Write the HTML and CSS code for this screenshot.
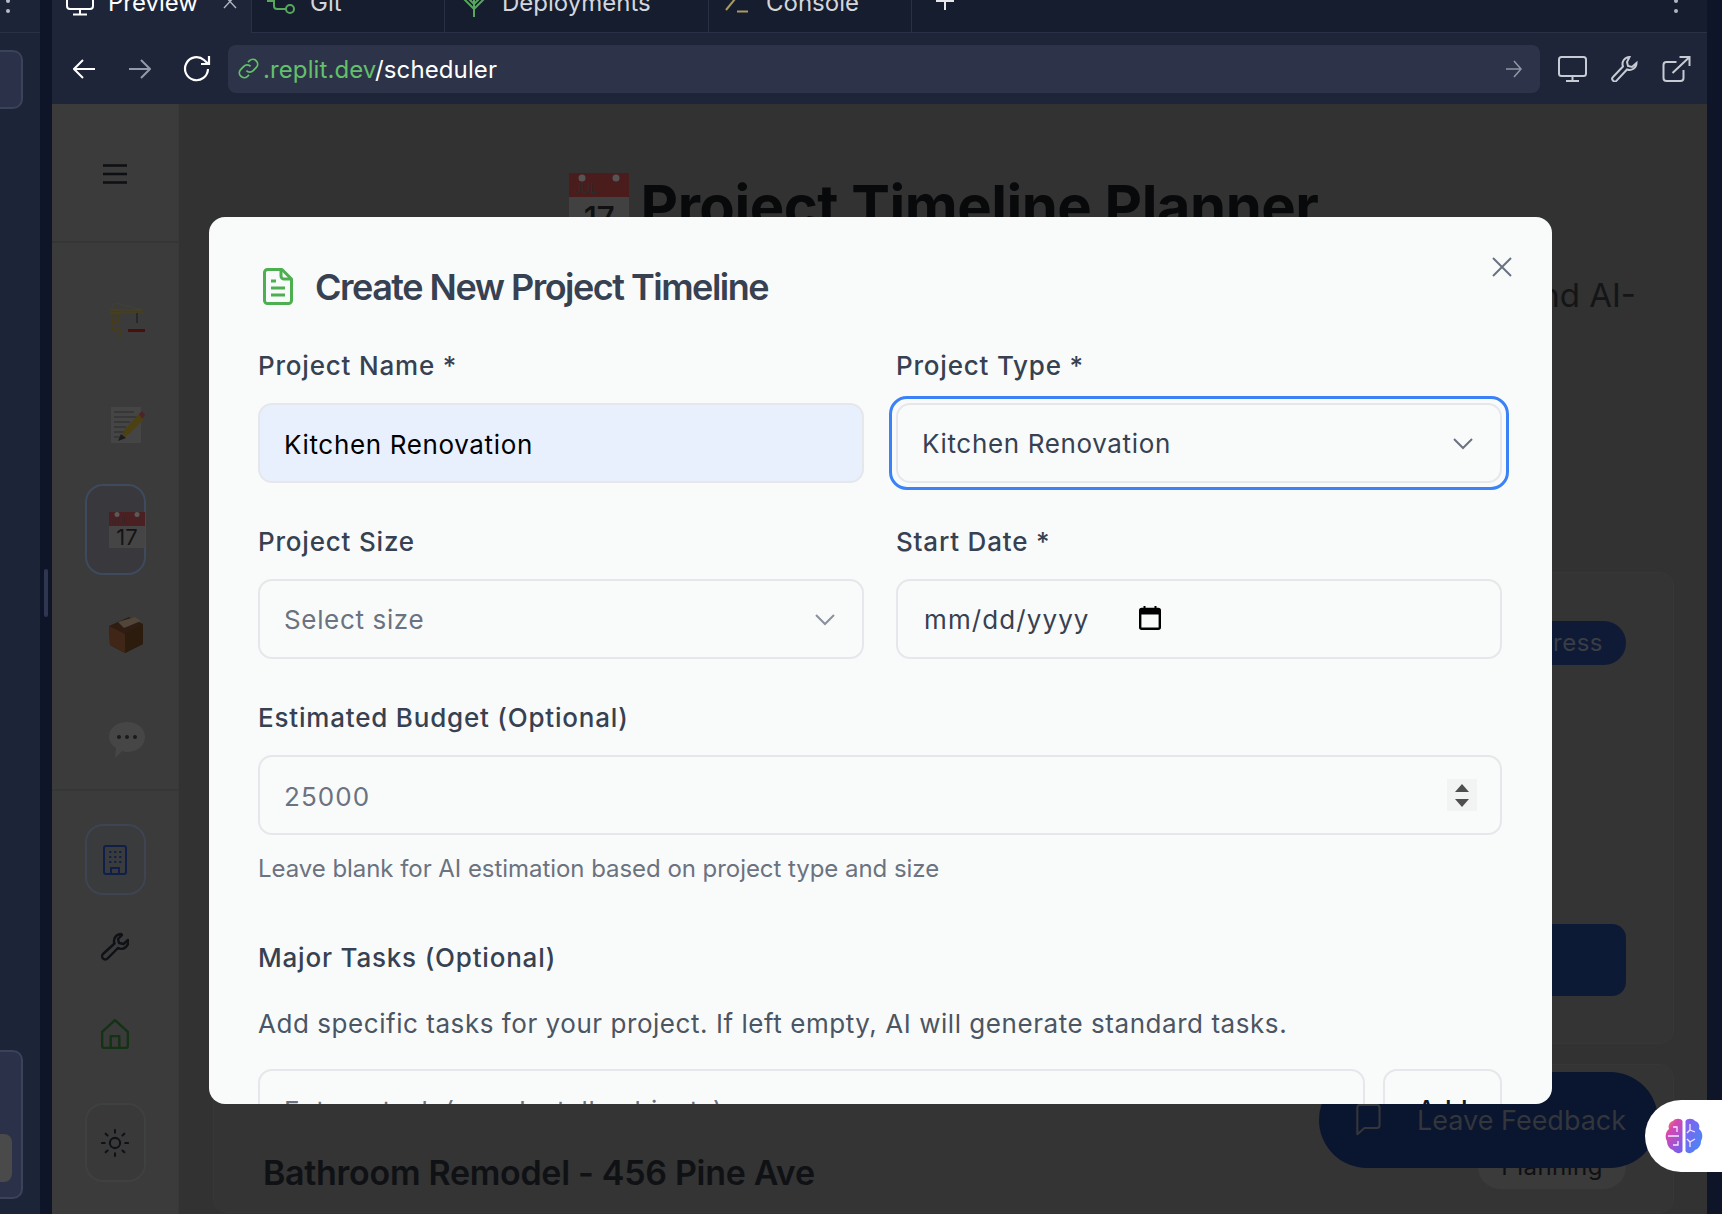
FILE: index.html
```html
<!DOCTYPE html>
<html lang="en">
<head>
<meta charset="utf-8">
<title>Project Timeline Planner</title>
<link rel="stylesheet" href="styles.css">
</head>
<body>
<div class="ide">
  <aside class="rail">
    <div class="rail-top">
      <svg class="rail-dots" viewBox="0 0 6 16" fill="#b7bcc7"><circle cx="3" cy="1" r="2"/><circle cx="3" cy="11" r="2"/></svg>
    </div>
    <div class="rail-card rail-card-a"></div>
    <div class="rail-card rail-card-b"><div class="rail-thumb"></div></div>
  </aside>
  <div class="gutter"><div class="gutter-handle"></div></div>
  <section class="pane">
    <div class="tabs">
      <div class="tab tab-active tab-preview">
        <svg class="tab-icon" viewBox="0 -11 28 28" fill="none" stroke="#fff" stroke-width="2"><rect x="1" y="-12" width="26" height="21" rx="3"/><path d="M14 9v5M7 14.500h14"/></svg>
        <span>Preview</span>
        <svg class="tab-x" viewBox="0 -4 14 14" stroke="#aeb4c0" stroke-width="1.400"><path d="M1-5l12 13M13-5L1 8"/></svg>
      </div>
      <div class="tab tab-git">
        <svg class="tab-icon" viewBox="0 -11 28 28" fill="none" stroke="#57a85c" stroke-width="2"><path d="M0 1h7M7-11v17q0 3 3 3h9"/><circle cx="23" cy="9" r="4"/></svg>
        <span>Git</span>
      </div>
      <div class="tab tab-deploy">
        <svg class="tab-icon" viewBox="0 -11 28 28" fill="none" stroke="#57a85c" stroke-width="2"><path d="M14 17V-4M14 4L7-3M14 4l7-7M14 9L4-1M14 9L24-1"/></svg>
        <span>Deployments</span>
      </div>
      <div class="tab tab-console">
        <svg class="tab-icon" viewBox="0 -11 28 28" fill="none" stroke-width="2"><path d="M2 10L11-1" stroke="#a99a5e"/><path d="M13 11.500h11" stroke="#a99a5e"/></svg>
        <span>Console</span>
      </div>
      <div class="tab-plus">
        <svg viewBox="0 0 20 20" stroke="#e5e7eb" stroke-width="2"><path d="M10-6v16M1 1h18"/></svg>
      </div>
      <div class="tab-more">
        <svg viewBox="0 0 6 16" fill="#aeb4c0"><circle cx="3" cy="1" r="2"/><circle cx="3" cy="11" r="2"/></svg>
      </div>
    </div>

    <div class="toolbar">
      <svg class="tool-arrow" viewBox="0 0 22 20" fill="none" stroke="#fff" stroke-width="2"><path d="M22 10H2M10 1l-9 9 9 9"/></svg>
      <svg class="tool-arrow tool-forward" viewBox="0 0 22 20" fill="none" stroke="#9299a8" stroke-width="2"><path d="M0 10h20M12 1l9 9-9 9"/></svg>
      <svg class="tool-reload" viewBox="0 0 28 28" fill="none" stroke="#fff" stroke-width="2.200"><path d="M25 14a11.500 11.500 0 1 1-4-9l4 3.600"/><path d="M26 1v8h-8"/></svg>
      <div class="address">
        <svg class="link-icon" viewBox="0 0 22 22" fill="none" stroke="#63c06b" stroke-width="1.700"><path d="M9 13a4.500 4.500 0 0 0 6.500 0l3-3A4.600 4.600 0 0 0 12 3.500l-1.500 1.500"/><path d="M13 9a4.500 4.500 0 0 0-6.500 0l-3 3A4.600 4.600 0 0 0 10 18.500l1.500-1.500"/></svg>
        <span class="url"><span class="url-host">.replit.dev</span>/scheduler</span>
        <svg class="go-icon" viewBox="0 0 16 18" fill="none" stroke="#8f96a6" stroke-width="1.600"><path d="M0 9h15M8 1l7 8-7 8"/></svg>
      </div>
      <div class="tool-right">
        <svg class="tool-icon" viewBox="0 0 29 26" fill="none" stroke="#c7cbd3" stroke-width="2"><rect x="1" y="1" width="27" height="19" rx="2.500"/><path d="M14.500 20v5M8 25h13"/></svg>
        <svg class="tool-icon" viewBox="0 0 28 26" fill="none" stroke="#c7cbd3" stroke-width="2"><path d="M19 1a7 7 0 0 0-6.500 9.500L2.500 21a2.500 2.500 0 0 0 3.600 3.600L16.500 13.500A7 7 0 0 0 26 7l-4.500 4-4-1-1-4z"/></svg>
        <svg class="tool-icon" viewBox="0 0 28 26" fill="none" stroke="#c7cbd3" stroke-width="2"><path d="M14 6H4a3 3 0 0 0-3 3v13a3 3 0 0 0 3 3h14a3 3 0 0 0 3-3V14"/><path d="M10 17L26 2M17 1h10v9"/></svg>
      </div>
    </div>

    <div class="app">
      <nav class="sidebar">
        <div class="side-head">
          <svg class="burger" viewBox="0 0 24 20" stroke="#0d0f12" stroke-width="2.600"><path d="M0 1.500h24M0 10h24M0 18.500h24"/></svg>
        </div>
        <div class="side-group">
          <div class="slot">
            <svg class="emoji" viewBox="0 0 36 36" fill="none"><path d="M2 36L5 3M12 36L8 3M4 10l5 4M9 10l-5 4M3 18l7 4M10 18l-7 4M2 26l9 4M11 26l-9 4" stroke="#4a3d14" stroke-width="1"/><path d="M1 8h33M1 11h33" stroke="#4f4214" stroke-width="1.200"/><path d="M6 1L1 8M7 1l26 7" stroke="#44443a" stroke-width="0.700"/><path d="M28 11v10" stroke="#1e1e1e" stroke-width="1.200"/><rect x="19" y="27" width="17" height="3" fill="#4a0f0c"/></svg>
          </div>
          <div class="slot">
            <svg class="emoji" viewBox="0 0 36 36"><rect x="2" width="30" height="36" fill="#454545"/><path d="M5 5h20M5 10h24M5 15h16M5 20h12M5 25h10M5 30h10" stroke="#2a2a2a" stroke-width="1"/><path d="M12 32l4-10 14-15 5 5-15 15z" fill="#4d4011"/><path d="M30 7l3-3 3 4-3 4z" fill="#4d2527"/><path d="M9 34l3-7 5 4z" fill="#1c1c1c"/></svg>
          </div>
          <div class="slot slot-active">
            <svg class="emoji" viewBox="0 0 36 36"><rect width="36" height="14" fill="#4a2022"/><rect y="14" width="36" height="22" fill="#454545"/><text x="2" y="12" class="emoji-jul">JUL</text><text x="18" y="33" class="emoji-day">17</text><circle cx="8" cy="2.500" r="2.500" fill="#5a5a5a"/><circle cx="28" cy="2.500" r="2.500" fill="#5a5a5a"/></svg>
          </div>
          <div class="slot">
            <svg class="emoji" viewBox="0 0 36 36"><path d="M0 9L20 0l14 7v20L16 36 1 28z" fill="#2f1d13"/><path d="M0 9l16 8v19L1 28z" fill="#3f2617"/><path d="M16 17l18-10v20L16 36z" fill="#2c1c0e"/><path d="M9 5l17-5 6 4-17 7z" fill="#504639"/></svg>
          </div>
          <div class="slot">
            <svg class="emoji" viewBox="0 0 36 36"><path d="M18 0c10 0 18 6 18 15s-8 15-18 15q-3 0-5-1l-7 7 1-10Q0 22 0 15C0 6 8 0 18 0z" fill="#464646"/><circle cx="10" cy="15" r="2" fill="#1b1b1b"/><circle cx="18" cy="15" r="2" fill="#1b1b1b"/><circle cx="26" cy="15" r="2" fill="#1b1b1b"/></svg>
          </div>
        </div>
        <div class="side-group side-tools">
          <div class="tool-slot tool-box">
            <svg class="side-icon" viewBox="0 0 24 30" fill="none" stroke="#0f1f4a" stroke-width="2"><rect x="1" y="1" width="22" height="28" rx="2"/><path d="M8 29v-6h8v6"/><path d="M7 7h.5M12 7h.5M17 7h.5M7 12h.5M12 12h.5M17 12h.5M7 17h.5M12 17h.5M17 17h.5" stroke-linecap="round"/></svg>
          </div>
          <div class="tool-slot">
            <svg class="side-icon" viewBox="0 0 28 28" fill="none" stroke="#0f1116" stroke-width="2.400" stroke-linejoin="round"><path d="M20 1a7 7 0 0 0-6.500 9.500L2 21a3 3 0 0 0 4.500 4.500L17 15a7 7 0 0 0 10-8l-4.500 4-4.500-1-1-4 4-4a7 7 0 0 0-1-1z"/></svg>
          </div>
          <div class="tool-slot">
            <svg class="side-icon" viewBox="0 0 26 28" fill="none" stroke="#143214" stroke-width="2.200" stroke-linejoin="round"><path d="M1 12L13 1l12 11v13a2 2 0 0 1-2 2H3a2 2 0 0 1-2-2z"/><path d="M9 27V16h8v11"/></svg>
          </div>
          <div class="tool-slot tool-box tool-sun">
            <svg class="side-icon" viewBox="0 0 30 30" fill="none" stroke="#0f1116" stroke-width="2.200" stroke-linecap="round"><circle cx="15" cy="15" r="5.500"/><path d="M15 1v3M15 26v3M1 15h3M26 15h3M5 5l2 2M23 23l2 2M5 25l2-2M23 7l2-2"/></svg>
          </div>
        </div>
      </nav>

      <main class="main">
        <header class="hero">
          <h1 class="hero-title">
            <svg class="hero-cal" viewBox="0 0 60 60"><rect width="60" height="24" fill="#4a1d1c"/><rect y="24" width="60" height="36" fill="#414141"/><text x="5" y="20" class="hero-jul">JUL</text><text x="30" y="57" class="hero-day">17</text><circle cx="13" cy="5" r="3.500" fill="#555"/><circle cx="47" cy="5" r="3.500" fill="#555"/></svg>
            <span>Project Timeline Planner</span>
          </h1>
          <p class="hero-sub">Plan construction projects with smart scheduling and AI-</p>
        </header>
        <article class="card card-first">
          <div class="card-head">
            <h2 class="card-title">Kitchen Remodel - 123 Main St</h2>
            <span class="pill pill-blue">In Progress</span>
          </div>
          <div class="card-action">View Timeline</div>
        </article>
        <article class="card">
          <div class="card-head card-head-second">
            <h2 class="card-title">Bathroom Remodel - 456 Pine Ave</h2>
            <span class="pill pill-grey">Planning</span>
          </div>
        </article>
      </main>
    </div>

    <button class="feedback" type="button">
      <svg class="feedback-icon" viewBox="0 0 28 36" fill="none" stroke="#33363b" stroke-width="2.400" stroke-linejoin="round"><path d="M4 1h20a3 3 0 0 1 3 3v20a3 3 0 0 1-3 3H10l-8 7V4a3 3 0 0 1 2-3z"/></svg>
      <span>Leave Feedback</span>
    </button>

    <div class="modal">
      <svg class="modal-close" viewBox="0 0 20 20" stroke="#6b7280" stroke-width="2"><path d="M1 1l18 18M19 1L1 19"/></svg>
      <h2 class="modal-title">
        <svg class="doc-icon" viewBox="0 0 30 37" fill="none" stroke="#4caf50" stroke-width="3" stroke-linejoin="round"><path d="M4 1.500h15L28.500 11v21.500a3 3 0 0 1-3 3h-21a3 3 0 0 1-3-3v-28a3 3 0 0 1 3-3z"/><path d="M18 2v6a3 3 0 0 0 3 3h7M8 13h5M8 20h14M8 27h14"/></svg>
        <span>Create New Project Timeline</span>
      </h2>
      <div class="form-grid">
        <div class="form-field">
          <label class="label" for="pname">Project Name *</label>
          <input class="control control-input control-filled" id="pname" type="text" value="Kitchen Renovation">
        </div>
        <div class="form-field">
          <label class="label" for="ptype">Project Type *</label>
          <div class="select-wrap select-focus">
            <select class="control control-select" id="ptype"><option>Kitchen Renovation</option></select>
            <svg class="chevron" viewBox="0 0 20 12" fill="none" stroke="#6b7280" stroke-width="2"><path d="M1 1l9 9 9-9"/></svg>
          </div>
        </div>
        <div class="form-field">
          <label class="label" for="psize">Project Size</label>
          <div class="select-wrap">
            <select class="control control-select control-muted" id="psize"><option>Select size</option></select>
            <svg class="chevron chevron-soft" viewBox="0 0 20 12" fill="none" stroke="#8a909c" stroke-width="2"><path d="M1 1l9 9 9-9"/></svg>
          </div>
        </div>
        <div class="form-field">
          <label class="label" for="pdate">Start Date *</label>
          <div class="select-wrap">
            <input class="control control-date" id="pdate" type="text" value="mm/dd/yyyy">
            <svg class="date-icon" viewBox="0 0 22 24" fill="none" stroke="#000" stroke-width="2.400"><rect x="1.200" y="3" width="19.600" height="19.800" rx="1.500"/><path d="M1 6h20" stroke-width="5"/><path d="M5.500 0v3M16.500 0v3" stroke-width="2"/></svg>
          </div>
        </div>
        <div class="form-field form-wide">
          <label class="label" for="pbudget">Estimated Budget (Optional)</label>
          <div class="select-wrap">
            <input class="control control-input control-number" id="pbudget" type="text" placeholder="25000">
            <div class="spinner"><i class="spin-up"></i><i class="spin-down"></i></div>
          </div>
          <p class="help">Leave blank for AI estimation based on project type and size</p>
        </div>
        <div class="form-wide tasks">
          <div class="label">Major Tasks (Optional)</div>
          <p class="tasks-note">Add specific tasks for your project. If left empty, AI will generate standard tasks.</p>
          <div class="task-row">
            <input class="control control-input task-input" type="text" placeholder="Enter a task (e.g., Install cabinets)">
            <button class="add-btn" type="button">Add</button>
          </div>
        </div>
      </div>
    </div>
  </section>
  <div class="edge"></div>
  <div class="brain-tab">
    <svg class="brain" viewBox="0 0 38 36" fill="none">
      <defs>
        <linearGradient id="bl" x1="0" y1="0" x2="0.700" y2="1"><stop offset="0" stop-color="#f0a13c"/><stop offset="0.350" stop-color="#d946b0"/><stop offset="1" stop-color="#7c5ce8"/></linearGradient>
        <linearGradient id="br" x1="0" y1="0" x2="1" y2="1"><stop offset="0" stop-color="#8b5cf0"/><stop offset="1" stop-color="#3f8df5"/></linearGradient>
      </defs>
      <path d="M17.500 3C16 0 10 0 8 3 4 4 3 8 4 11 0 14 0 20 2 23c0 5 3 8 6 9 3 4 8 4 9.500 1z" fill="url(#bl)"/>
      <path d="M20.500 3C22 0 28 0 30 3c4 1 5 5 4 8 4 3 4 9 2 12 0 5-3 8-6 9-3 4-8 4-9.500 1z" fill="url(#br)"/>
      <path d="M3 18h11M8 9h4v5M8 27h5v-4M25 6v6l-3 3M25 12l5 2M25 24l-3-3M25 24l5-3M25 24v5" stroke="#f3e8ff" stroke-width="1.300"/>
    </svg>
  </div>
</div>
</body>
</html>
```

FILE: styles.css
```css
* { box-sizing: border-box; }
html, body { margin: 0; height: 100%; }
body { font-family: Inter, "Noto Sans", sans-serif; background: #0e1529; overflow: hidden; }
h1, h2, p { margin: 0; }
svg { display: block; flex: none; }

.ide { position: relative; display: flex; width: 1722px; height: 1214px; overflow: hidden; }

/* left rail */
.rail { position: relative; width: 40px; flex: none; background: #1c2438; }
.rail-top { height: 33px; padding-left: 5px; border-bottom: 1px solid #2a3146; }
.rail-dots { width: 6px; height: 16px; }
.rail-card { position: absolute; left: -10px; width: 33px; background: #2b3148; border: 2px solid #3b425b; border-radius: 10px; }
.rail-card-a { top: 50px; height: 59px; }
.rail-card-b { top: 1050px; height: 149px; padding-top: 82px; }
.rail-thumb { width: 20px; height: 48px; background: #4a4a4a; border-radius: 8px; }

.gutter { width: 12px; flex: none; padding: 569px 4px 0; background: #0e1529; }
.gutter-handle { width: 4px; height: 48px; background: #2e3650; border-radius: 2px; }

.edge { width: 15px; flex: none; background: #0e1529; }

/* pane */
.pane { position: relative; display: flex; flex-direction: column; flex: 1; min-width: 0; background: #1e2538; border-bottom-left-radius: 4px; }

.tabs { display: flex; height: 33px; flex: none; background: #161d2e; border-bottom: 1px solid #2a3146; }
.tab { display: flex; align-items: center; height: 33px; padding-bottom: 27px; border-right: 1px solid #2a3146; color: #d3d6dc; font-size: 24px; line-height: 30px; }
.tab-active { background: #1e2538; color: #fff; }
.tab-preview { width: 200px; padding-left: 14px; gap: 14px; }
.tab-git { width: 193px; padding-left: 15px; gap: 15px; }
.tab-deploy { width: 264px; padding-left: 15px; gap: 14px; }
.tab-console { width: 203px; padding-left: 15px; gap: 14px; }
.tab-icon { width: 28px; height: 28px; }
.tab-preview .tab-x { width: 14px; height: 14px; margin-left: 11px; }
.tab-plus { width: 20px; margin-left: 23px; }
.tab-plus svg { width: 20px; height: 20px; }
.tab-more { width: 6px; margin-left: auto; margin-right: 28px; }
.tab-more svg { width: 6px; height: 16px; }

.toolbar { display: flex; align-items: center; height: 71px; flex: none; padding-left: 21px; background: #1e2538; }
.tool-arrow { width: 22px; height: 20px; }
.tool-forward { margin-left: 34px; }
.tool-reload { width: 30px; height: 28px; margin-left: 31px; }
.address { display: flex; align-items: center; width: 1312px; height: 48px; margin-left: 16px; padding: 0 18px 0 9px; background: #2d3348; border-radius: 8px; }
.link-icon { width: 23px; height: 23px; }
.url { margin-left: 3px; padding-top: 2px; color: #fff; font-size: 24px; line-height: 30px; letter-spacing: 0.1px; }
.url-host { color: #63c06b; }
.go-icon { width: 16px; height: 18px; margin-left: auto; }
.tool-right { display: flex; align-items: center; gap: 23px; margin-left: 18px; }
.tool-icon { width: 29px; height: 26px; }

.app { display: flex; flex: 1; min-height: 0; }

/* sidebar */
.sidebar { width: 127px; flex: none; background: #3a3b3a; border-right: 1px solid #373937; }
.side-head { display: flex; justify-content: center; align-items: center; height: 139px; border-bottom: 2px solid #343635; }
.burger { width: 24px; height: 20px; margin-top: 3px; }
.side-group { display: flex; flex-direction: column; align-items: center; gap: 14px; padding-top: 31px; height: 548px; border-bottom: 2px solid #353735; }
.slot { display: flex; align-items: center; justify-content: center; width: 61px; height: 91px; border-radius: 18px; border: 2px solid transparent; }
.slot-active { border-color: #3e4a5e; background: #39393d; }
.emoji { width: 36px; height: 36px; margin-left: 24px; }
.emoji-jul { font: 9px Inter, sans-serif; fill: #2d2d2d; }
.emoji-day { font: 22px Inter, sans-serif; fill: #141414; text-anchor: middle; }
.side-tools { gap: 17px; padding-top: 33px; height: auto; border-bottom: 0; }
.tool-slot { display: flex; align-items: center; justify-content: center; flex: none; width: 61px; height: 70px; border-radius: 18px; border: 2px solid transparent; }
.tool-box { height: 71px; border-color: #3e4452; background: #3a3b3d; }
.tool-sun { height: 79px; margin-top: 17px; border-color: #3f4040; background: #383938; }
.side-icon { width: 28px; height: 30px; }

/* main */
.main { flex: 1; min-width: 0; padding: 0 33px 0 34px; background: #313231; overflow: hidden; }
.hero { height: 468px; padding-top: 66px; }
.hero-title { display: flex; justify-content: center; align-items: center; gap: 12px; height: 72px; color: #08090b; font-size: 58px; font-weight: 700; line-height: 72px; letter-spacing: -0.5px; }
.hero-cal { width: 60px; height: 60px; margin-top: -6px; }
.hero-jul { font: 13px Inter, sans-serif; fill: #2c2c2c; }
.hero-day { font: 500 32px Inter, sans-serif; fill: #101010; text-anchor: middle; }
.hero-sub { margin-top: 33px; padding-right: 38px; text-align: right; color: #141517; font-size: 33px; line-height: 40px; white-space: nowrap; }
.card { padding: 48px 47px 0 49px; background: #333433; border: 1px solid #363736; border-radius: 14px; }
.card-first { height: 472px; margin-bottom: 20px; }
.card-head { display: flex; justify-content: space-between; align-items: center; height: 44px; }
.card-head-second { height: 80px; margin-top: 19px; }
.card-title { color: #0f1115; font-size: 34px; font-weight: 600; letter-spacing: -0.3px; white-space: nowrap; }
.pill { padding: 0 23px; border-radius: 22px; font-size: 24px; line-height: 44px; letter-spacing: 0.5px; }
.pill-blue { background: #0f1b36; color: #3a3d44; }
.pill-grey { margin-top: -10px; background: #3a3b3a; color: #0e1014; }
.card-action { display: flex; align-items: center; justify-content: center; height: 72px; margin-top: 259px; background: #0d1a36; border-radius: 14px; color: #34373c; font-size: 24px; }

/* floating */
.feedback { position: absolute; left: 1267px; top: 1072px; display: flex; align-items: center; gap: 36px; width: 339px; height: 96px; padding: 0 0 0 36px; border: 0; border-radius: 48px; background: #0a1530; color: #33363b; font: 27px Inter, sans-serif; }
.feedback-icon { width: 26px; height: 32px; }
.brain-tab { position: absolute; left: 1645px; top: 1100px; display: flex; align-items: center; width: 77px; height: 72px; padding-left: 20px; background: #fff; border-radius: 36px 0 0 36px; }
.brain { width: 38px; height: 36px; }

/* modal */
.modal { position: absolute; left: 157px; top: 217px; width: 1343px; height: 887px; padding: 51px 0 0 49px; background: #f9fbfb; border-radius: 16px; overflow: hidden; }
.modal-close { position: absolute; right: 40px; top: 40px; width: 20px; height: 20px; }
.modal-title { display: flex; align-items: center; gap: 22px; height: 37px; padding-top: 1px; color: #374151; font-size: 36px; font-weight: 600; line-height: 37px; letter-spacing: -1.5px; white-space: nowrap; }
.doc-icon { width: 30px; height: 37px; margin-left: 5px; margin-top: -1px; }
.form-grid { display: grid; grid-template-columns: 606px 606px; column-gap: 32px; row-gap: 41px; margin-top: 43px; }
.form-field { display: flex; flex-direction: column; }
.form-wide { grid-column: 1 / -1; }
.label { display: block; height: 36px; color: #374151; font-size: 26px; font-weight: 450; line-height: 36px; letter-spacing: 0.8px; }
.form-field .label { margin-bottom: 19px; }
.control { display: block; width: 100%; height: 80px; padding: 0 24px; border: 2px solid #e5e7eb; border-radius: 14px; background: transparent; color: #374151; font: 26px Inter, sans-serif; letter-spacing: 0.65px; outline: none; }
.control-input { padding-top: 2px; }
.control::placeholder { color: #6b7280; opacity: 1; }
.control-filled { background: #e8f0fe; color: #000; }
.control-select { appearance: none; -webkit-appearance: none; }
.control-muted { color: #6b7280; }
.control-date { padding-left: 26px; letter-spacing: 1.1px; }
.control-number { letter-spacing: 1.1px; }
.task-input { letter-spacing: 0.65px; }
.select-wrap { position: relative; }
.select-focus::before { content: ""; position: absolute; inset: -7px; border: 3px solid #3b82f6; border-radius: 18px; }
.chevron { position: absolute; right: 29px; top: 35px; width: 20px; height: 12px; pointer-events: none; }
.date-icon { position: absolute; left: 243px; top: 27px; width: 22px; height: 24px; }
.spinner { position: absolute; right: 25px; top: 24px; display: flex; flex-direction: column; align-items: center; justify-content: center; gap: 7px; width: 30px; height: 32px; background: #f2f3f3; }
.spin-up { width: 0; height: 0; border: 7px solid transparent; border-top: 0; border-bottom: 8px solid #4f4f4f; }
.spin-down { width: 0; height: 0; border: 7px solid transparent; border-bottom: 0; border-top: 8px solid #4f4f4f; }
.help { margin-top: 18px; color: #6b7280; font-size: 24px; line-height: 32px; letter-spacing: -0.05px; }
.tasks { margin-top: 14px; }
.tasks-note { margin-top: 30px; color: #4b5563; font-size: 26px; line-height: 36px; letter-spacing: 0.55px; }
.task-row { display: flex; gap: 18px; margin-top: 27px; }
.task-input { flex: 1; width: auto; }
.add-btn { width: 119px; height: 80px; border: 2px solid #e5e7eb; border-radius: 14px; background: transparent; color: #111827; font: 500 26px Inter, sans-serif; }
```
